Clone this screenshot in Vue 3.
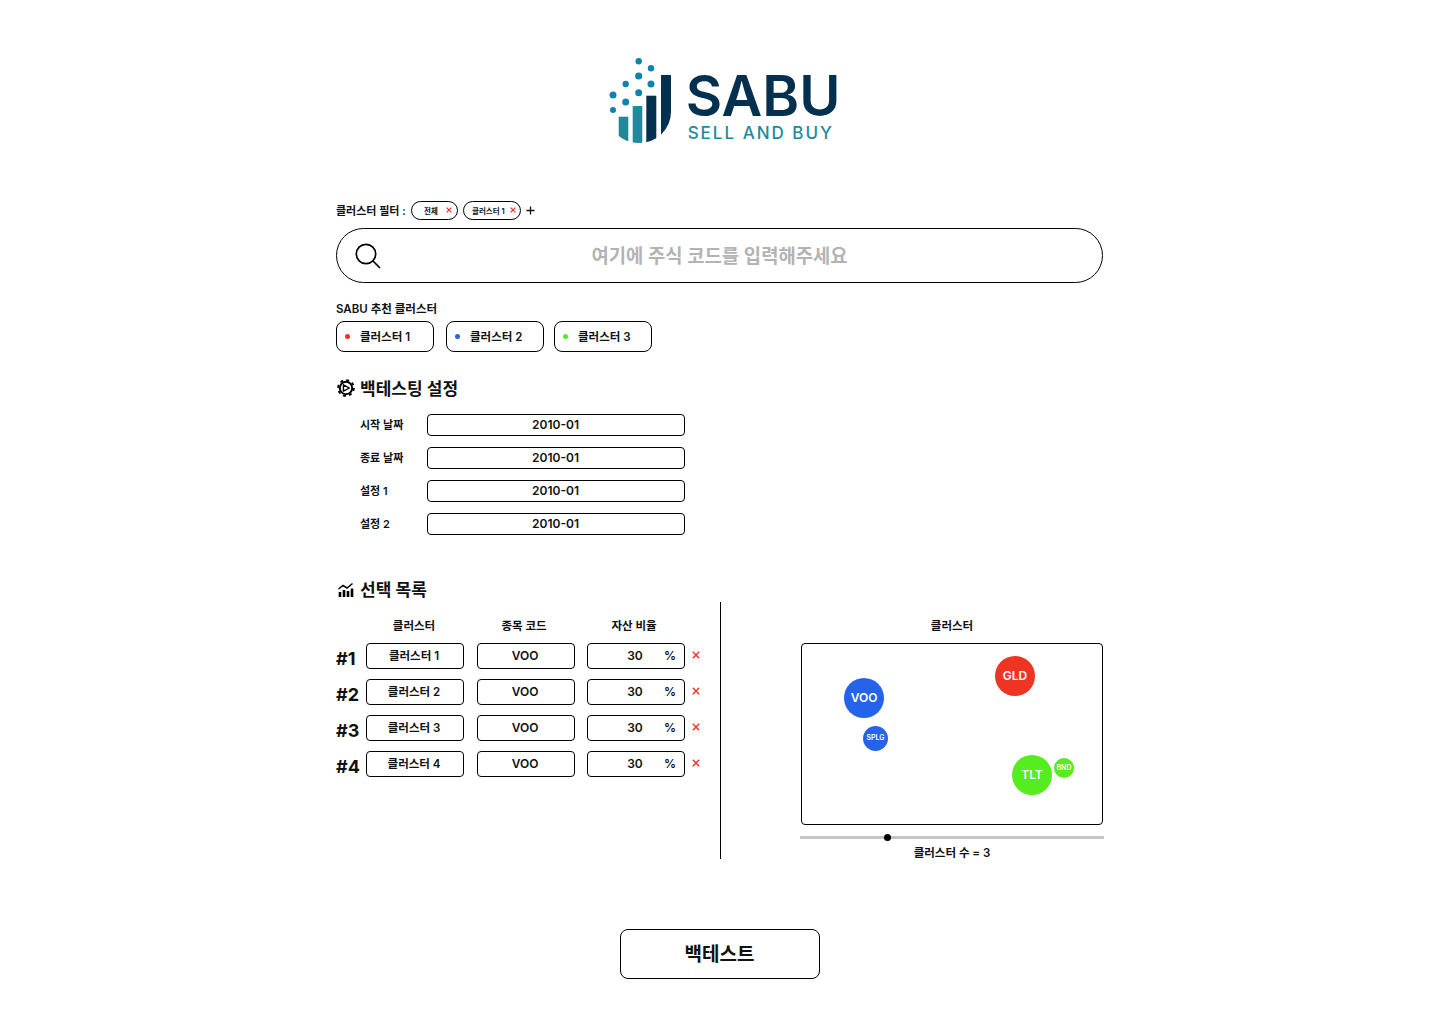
<template>
  <div class="page">
    <header class="logo">
      <svg class="logo-icon" width="72" height="95" viewBox="0 0 72 95">
        <defs>
          <clipPath id="shield">
            <path d="M0 0H70V62A32 31 0 0 1 6 62V0Z" />
          </clipPath>
        </defs>
        <circle v-for="(d, index) in logoDots" :key="index" :cx="d[0]" :cy="d[1]" :r="d[2]" fill="#0f83aa" />
        <g clip-path="url(#shield)">
          <rect x="17.7" y="66.7" width="9.6" height="30" fill="#23879a" />
          <rect x="31.7" y="56" width="9.6" height="40" fill="#1f8a9c" />
          <rect x="45.3" y="45.7" width="10" height="50" fill="#04304f" />
          <rect x="60" y="25" width="10" height="70" fill="#04304f" />
        </g>
      </svg>
      <div class="logo-text">
        <div class="logo-name">SABU</div>
        <div class="logo-sub">SELL AND BUY</div>
      </div>
    </header>

    <div class="filter">
      <span class="filter-label">클러스터 필터 :</span>
      <span v-for="(item, index) in filters" :key="index" class="pill" :class="item.cls">
        <span class="pill-name">{{ item.name }}</span>
        <svg class="cross" width="6" height="6" viewBox="0 0 10 10">
          <path d="M1 1L9 9M9 1L1 9" stroke="#f03424" stroke-width="2" />
        </svg>
      </span>
      <svg class="plus" width="9" height="9" viewBox="0 0 9 9">
        <path d="M4.5 0.5V8.5M0.5 4.5H8.5" stroke="#111" stroke-width="1.3" />
      </svg>
    </div>

    <div class="search">
      <svg class="search-icon" width="26" height="26" viewBox="0 0 26 26" fill="none">
        <circle cx="11" cy="11" r="9.7" stroke="#000" stroke-width="1.7" />
        <path d="M18 18L25 25" stroke="#000" stroke-width="1.7" />
      </svg>
      <span class="placeholder">여기에 주식 코드를 입력해주세요</span>
    </div>

    <div class="recommend-title">SABU 추천 클러스터</div>
    <div class="chips">
      <div v-for="(chip, index) in chips" :key="index" class="chip">
        <i class="dot" :style="{ background: chip.color }"></i>
        <span class="chip-name">{{ chip.name }}</span>
      </div>
    </div>

    <h2 class="heading settings-heading">
      <svg width="18" height="18" viewBox="0 0 18 18" fill="none">
        <circle cx="9" cy="9" r="7.9" stroke="#000" stroke-width="1.8" stroke-dasharray="3 3.2" />
        <circle cx="9" cy="9" r="6.2" stroke="#000" stroke-width="2" />
        <path d="M6.4 5.8L12.4 9L6.4 12.2Z" stroke="#000" stroke-width="1.4" stroke-linejoin="round" />
      </svg>
      <span class="heading-text">백테스팅 설정</span>
    </h2>
    <div class="settings">
      <div v-for="(row, index) in settings" :key="index" class="setting-row">
        <span class="setting-label">{{ row.label }}</span>
        <div class="setting-input">{{ row.value }}</div>
      </div>
    </div>

    <h2 class="heading list-heading">
      <svg width="18" height="18" viewBox="0 0 18 18" fill="none">
        <path d="M3 17V12M7 17V10M11 17V11M15 17V8.5" stroke="#000" stroke-width="2.6" />
        <path d="M1.5 9L6 5.5L10 8L15.5 3.5" stroke="#000" stroke-width="1.5" />
      </svg>
      <span class="heading-text">선택 목록</span>
    </h2>

    <div class="columns">
      <section class="list">
        <div class="list-head">
          <span>클러스터</span>
          <span>종목 코드</span>
          <span>자산 비율</span>
        </div>
        <div v-for="(row, index) in rows" :key="index" class="list-row">
          <span class="row-no">#{{ index + 1 }}</span>
          <div class="cell cell-name">{{ row.cluster }}</div>
          <div class="cell cell-code">{{ row.code }}</div>
          <div class="cell cell-ratio">
            <span>{{ row.ratio }}</span>
            <span class="percent">%</span>
          </div>
          <svg class="row-x" width="8" height="8" viewBox="0 0 10 10">
            <path d="M1 1L9 9M9 1L1 9" stroke="#f03424" stroke-width="1.8" />
          </svg>
        </div>
      </section>

      <section class="cluster">
        <div class="cluster-title">클러스터</div>
        <div class="canvas">
          <div
            v-for="(b, index) in bubbles"
            :key="index"
            class="bubble"
            :style="{
              left: b.x - b.size / 2 + 'px',
              top: b.y - b.size / 2 + 'px',
              width: b.size + 'px',
              height: b.size + 'px',
              background: b.color,
              fontSize: b.font + 'px',
            }"
          >
            {{ b.name }}
          </div>
        </div>
        <div class="slider"><i class="knob"></i></div>
        <div class="slider-label">클러스터 수 = 3</div>
      </section>
    </div>

    <div class="action">
      <button class="run" type="button">백테스트</button>
    </div>
  </div>
</template>

<script setup>
import { ref } from 'vue';

const logoDots = [
  [37.7, 11.3, 3.2],
  [50, 18.3, 3.2],
  [37.7, 26, 3.6],
  [24.7, 34, 3.2],
  [50, 34, 3.5],
  [37.7, 42.7, 3.5],
  [12, 45, 3.5],
  [24.7, 52, 3.5],
  [12, 60, 3],
];

const filters = ref([
  { name: '전체', cls: 'pill-all' },
  { name: '클러스터 1', cls: 'pill-one' },
]);

const chips = ref([
  { name: '클러스터 1', color: '#f03424' },
  { name: '클러스터 2', color: '#2563eb' },
  { name: '클러스터 3', color: '#55ec20' },
]);

const settings = ref([
  { label: '시작 날짜', value: '2010-01' },
  { label: '종료 날짜', value: '2010-01' },
  { label: '설정 1', value: '2010-01' },
  { label: '설정 2', value: '2010-01' },
]);

const rows = ref([
  { cluster: '클러스터 1', code: 'VOO', ratio: 30 },
  { cluster: '클러스터 2', code: 'VOO', ratio: 30 },
  { cluster: '클러스터 3', code: 'VOO', ratio: 30 },
  { cluster: '클러스터 4', code: 'VOO', ratio: 30 },
]);

// x, y are the bubble centres inside the canvas
const bubbles = ref([
  { name: 'VOO', x: 62, y: 54, size: 40, color: '#2563eb', font: 12 },
  { name: 'GLD', x: 213, y: 32, size: 40, color: '#f03424', font: 12 },
  { name: 'SPLG', x: 73.5, y: 94.5, size: 25, color: '#2563eb', font: 7 },
  { name: 'TLT', x: 230, y: 131, size: 40, color: '#55ec20', font: 12 },
  { name: 'BND', x: 262, y: 124, size: 20, color: '#55ec20', font: 7 },
]);
</script>

<style>
html,
body {
  margin: 0;
  background: #fff;
}
</style>

<style scoped>
.page {
  width: 767px;
  margin-left: 336px;
  font-family: Inter, 'Noto Sans CJK KR', sans-serif;
  color: #111;
}

.logo {
  display: flex;
  justify-content: center;
  align-items: flex-start;
  height: 200px;
  padding-top: 50px;
  padding-left: 2px;
  box-sizing: border-box;
}

.logo-text {
  margin-left: 13px;
  color: #04304f;
}

.logo-name {
  font-size: 56px;
  line-height: 44px;
  margin-top: 24px;
  font-weight: 600;
}

.logo-sub {
  font-size: 17px;
  line-height: 20px;
  margin-top: 5px;
  margin-left: 2px;
  font-weight: 500;
  letter-spacing: 2px;
  color: #1f8a9c;
}

.filter {
  display: flex;
  align-items: center;
  height: 20px;
  font-size: 11px;
  font-weight: 600;
}

.filter-label {
  width: 75px;
}

.pill {
  display: flex;
  align-items: center;
  height: 19px;
  box-sizing: border-box;
  border: 1px solid #000;
  border-radius: 10px;
  margin-right: 5px;
  font-size: 7.5px;
  padding-right: 4px;
}

.pill-all {
  width: 47px;
  padding-left: 12px;
  padding-right: 5px;
}

.pill-one {
  width: 58px;
  padding-left: 8px;
}

.pill-name {
  flex: 1;
}

.search {
  position: relative;
  display: flex;
  align-items: center;
  justify-content: center;
  height: 55px;
  margin-top: 8px;
  box-sizing: border-box;
  border: 1px solid #000;
  border-radius: 28px;
}

.search-icon {
  position: absolute;
  left: 18px;
  top: 14px;
}

.placeholder {
  padding-bottom: 2px;
  font-size: 18.8px;
  font-weight: 600;
  color: #b3b3b3;
}

.recommend-title {
  margin-top: 19px;
  height: 15px;
  line-height: 15px;
  font-size: 11.5px;
  font-weight: 600;
}

.chips {
  display: flex;
  margin-top: 4px;
}

.chip {
  display: flex;
  align-items: center;
  width: 98px;
  height: 31px;
  box-sizing: border-box;
  border: 1px solid #000;
  border-radius: 8px;
  padding-left: 8px;
  margin-right: 12px;
  font-size: 11.5px;
  font-weight: 600;
}

.chip:nth-child(2) {
  margin-right: 10px;
}

.chip-name {
  margin-bottom: 2px;
}

.dot {
  width: 5px;
  height: 5px;
  border-radius: 50%;
  margin-right: 10px;
}

.heading {
  display: flex;
  align-items: center;
  gap: 5px;
  height: 24px;
  margin: 0;
  padding-left: 1px;
  font-size: 17px;
  font-weight: 600;
}

.heading-text {
  margin-bottom: 2px;
}

.settings-heading {
  margin-top: 24px;
}

.settings {
  margin-top: 14px;
}

.setting-row {
  display: flex;
  align-items: center;
  height: 22px;
  margin-bottom: 11px;
}

.setting-label {
  width: 91px;
  padding-left: 24px;
  padding-bottom: 3px;
  box-sizing: border-box;
  font-size: 11px;
  font-weight: 600;
}

.setting-input {
  width: 258px;
  height: 22px;
  padding-right: 1px;
  box-sizing: border-box;
  border: 1px solid #000;
  border-radius: 4px;
  text-align: center;
  line-height: 20px;
  font-size: 12px;
  font-weight: 600;
}

.list-heading {
  margin-top: 42px;
}

.columns {
  display: flex;
  height: 257px;
  margin-top: 1px;
}

.list {
  width: 385px;
  height: 100%;
  box-sizing: border-box;
  border-right: 1px solid #000;
  padding-top: 17px;
}

.list-head {
  display: grid;
  grid-template-columns: 98px 98px 98px;
  column-gap: 12px;
  margin-left: 29px;
  height: 14px;
  line-height: 14px;
  font-size: 11.5px;
  font-weight: 600;
  text-align: center;
}

.list-row {
  position: relative;
  display: flex;
  height: 26px;
  margin-top: 10px;
}

.row-no {
  width: 30px;
  font-size: 18px;
  font-weight: 700;
  line-height: 32px;
}

.cell {
  width: 98px;
  height: 26px;
  padding-right: 2px;
  box-sizing: border-box;
  border: 1px solid #000;
  border-radius: 4px;
  text-align: center;
  line-height: 24px;
  font-size: 12px;
  font-weight: 600;
}

.cell-name {
  font-size: 11.5px;
}

.cell-code {
  margin-left: 13px;
}

.cell-ratio {
  position: relative;
  margin-left: 12px;
}

.percent {
  position: absolute;
  right: 8px;
  top: 0;
}

.row-x {
  position: absolute;
  left: 356px;
  top: 8px;
}

.cluster {
  width: 302px;
  margin-left: 80px;
  padding-top: 17px;
}

.cluster-title {
  height: 14px;
  line-height: 14px;
  font-size: 11.5px;
  font-weight: 600;
  text-align: center;
}

.canvas {
  position: relative;
  height: 182px;
  margin-top: 10px;
  box-sizing: border-box;
  border: 1px solid #000;
  border-radius: 4px;
}

.bubble {
  position: absolute;
  display: flex;
  align-items: center;
  justify-content: center;
  box-sizing: border-box;
  padding-bottom: 2px;
  border-radius: 50%;
  color: #fff;
  font-weight: 600;
}

.slider {
  position: relative;
  width: 304px;
  height: 3px;
  margin: 11px 0 0 -1px;
  background: #c4c4c4;
}

.knob {
  position: absolute;
  left: 84px;
  top: -2px;
  width: 7px;
  height: 7px;
  border-radius: 50%;
  background: #000;
}

.slider-label {
  margin-top: 7px;
  height: 15px;
  line-height: 15px;
  font-size: 11.5px;
  font-weight: 600;
  text-align: center;
}

.action {
  display: flex;
  justify-content: center;
  margin-top: 70px;
}

.run {
  width: 200px;
  height: 50px;
  padding: 0 0 3px;
  border: 1px solid #000;
  border-radius: 8px;
  background: #fff;
  color: #111;
  font-family: inherit;
  font-size: 19px;
  font-weight: 600;
}
</style>
